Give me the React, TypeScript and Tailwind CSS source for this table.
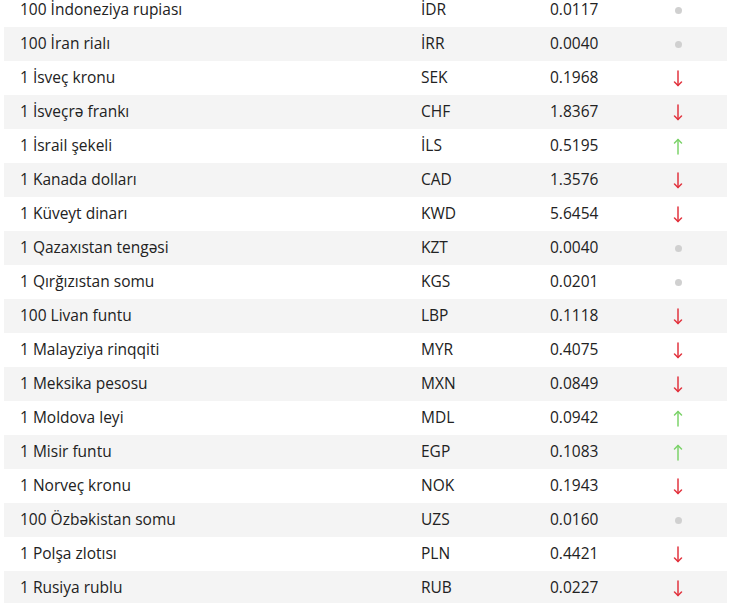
import React from 'react';

type Trend = 'up' | 'down' | 'flat';

const rates: { name: string; code: string; value: string; trend: Trend }[] = [
  { name: '100 İndoneziya rupiası', code: 'İDR', value: '0.0117', trend: 'flat' },
  { name: '100 İran rialı', code: 'İRR', value: '0.0040', trend: 'flat' },
  { name: '1 İsveç kronu', code: 'SEK', value: '0.1968', trend: 'down' },
  { name: '1 İsveçrə frankı', code: 'CHF', value: '1.8367', trend: 'down' },
  { name: '1 İsrail şekeli', code: 'İLS', value: '0.5195', trend: 'up' },
  { name: '1 Kanada dolları', code: 'CAD', value: '1.3576', trend: 'down' },
  { name: '1 Küveyt dinarı', code: 'KWD', value: '5.6454', trend: 'down' },
  { name: '1 Qazaxıstan tengəsi', code: 'KZT', value: '0.0040', trend: 'flat' },
  { name: '1 Qırğızıstan somu', code: 'KGS', value: '0.0201', trend: 'flat' },
  { name: '100 Livan funtu', code: 'LBP', value: '0.1118', trend: 'down' },
  { name: '1 Malayziya rinqqiti', code: 'MYR', value: '0.4075', trend: 'down' },
  { name: '1 Meksika pesosu', code: 'MXN', value: '0.0849', trend: 'down' },
  { name: '1 Moldova leyi', code: 'MDL', value: '0.0942', trend: 'up' },
  { name: '1 Misir funtu', code: 'EGP', value: '0.1083', trend: 'up' },
  { name: '1 Norveç kronu', code: 'NOK', value: '0.1943', trend: 'down' },
  { name: '100 Özbəkistan somu', code: 'UZS', value: '0.0160', trend: 'flat' },
  { name: '1 Polşa zlotısı', code: 'PLN', value: '0.4421', trend: 'down' },
  { name: '1 Rusiya rublu', code: 'RUB', value: '0.0227', trend: 'down' },
];

const TrendIcon = ({ trend }: { trend: Trend }) => {
  if (trend === 'flat') return <span className="block w-[7px] h-[7px] rounded-full bg-[#d0d0d0]" />;
  const color = trend === 'up' ? '#7cd36a' : '#e2343f';
  return (
    <svg width="12" height="17" viewBox="0 0 12 17" fill="none" stroke={color} strokeWidth="1.5" strokeLinecap="round" strokeLinejoin="round">
      {trend === 'down' ? (
        <>
          <path d="M6 1v14.5" />
          <path d="M2.5 12l3.5 3.5 3.5-3.5" />
        </>
      ) : (
        <>
          <path d="M6 16V1.5" />
          <path d="M2.5 5l3.5-3.5 3.5 3.5" />
        </>
      )}
    </svg>
  );
};

export default function App() {
  return (
    <div className="bg-white min-h-screen overflow-hidden font-['Open_Sans',sans-serif] text-[15.5px] text-[#222]">
      <div className="-mt-[7px] pl-1 pr-[7px]">
        {rates.map((r, i) => (
          <div key={r.code} className={`flex items-center h-[34px] px-4 ${i % 2 === 1 ? 'bg-[#f4f4f4]' : 'bg-white'}`}>
            <span className="w-[401px] shrink-0">{r.name}</span>
            <span className="w-[129px] shrink-0">{r.code}</span>
            <span className="w-[100px] shrink-0">{r.value}</span>
            <span className="w-[56px] shrink-0 flex justify-center">
              <TrendIcon trend={r.trend} />
            </span>
          </div>
        ))}
      </div>
    </div>
  );
}
